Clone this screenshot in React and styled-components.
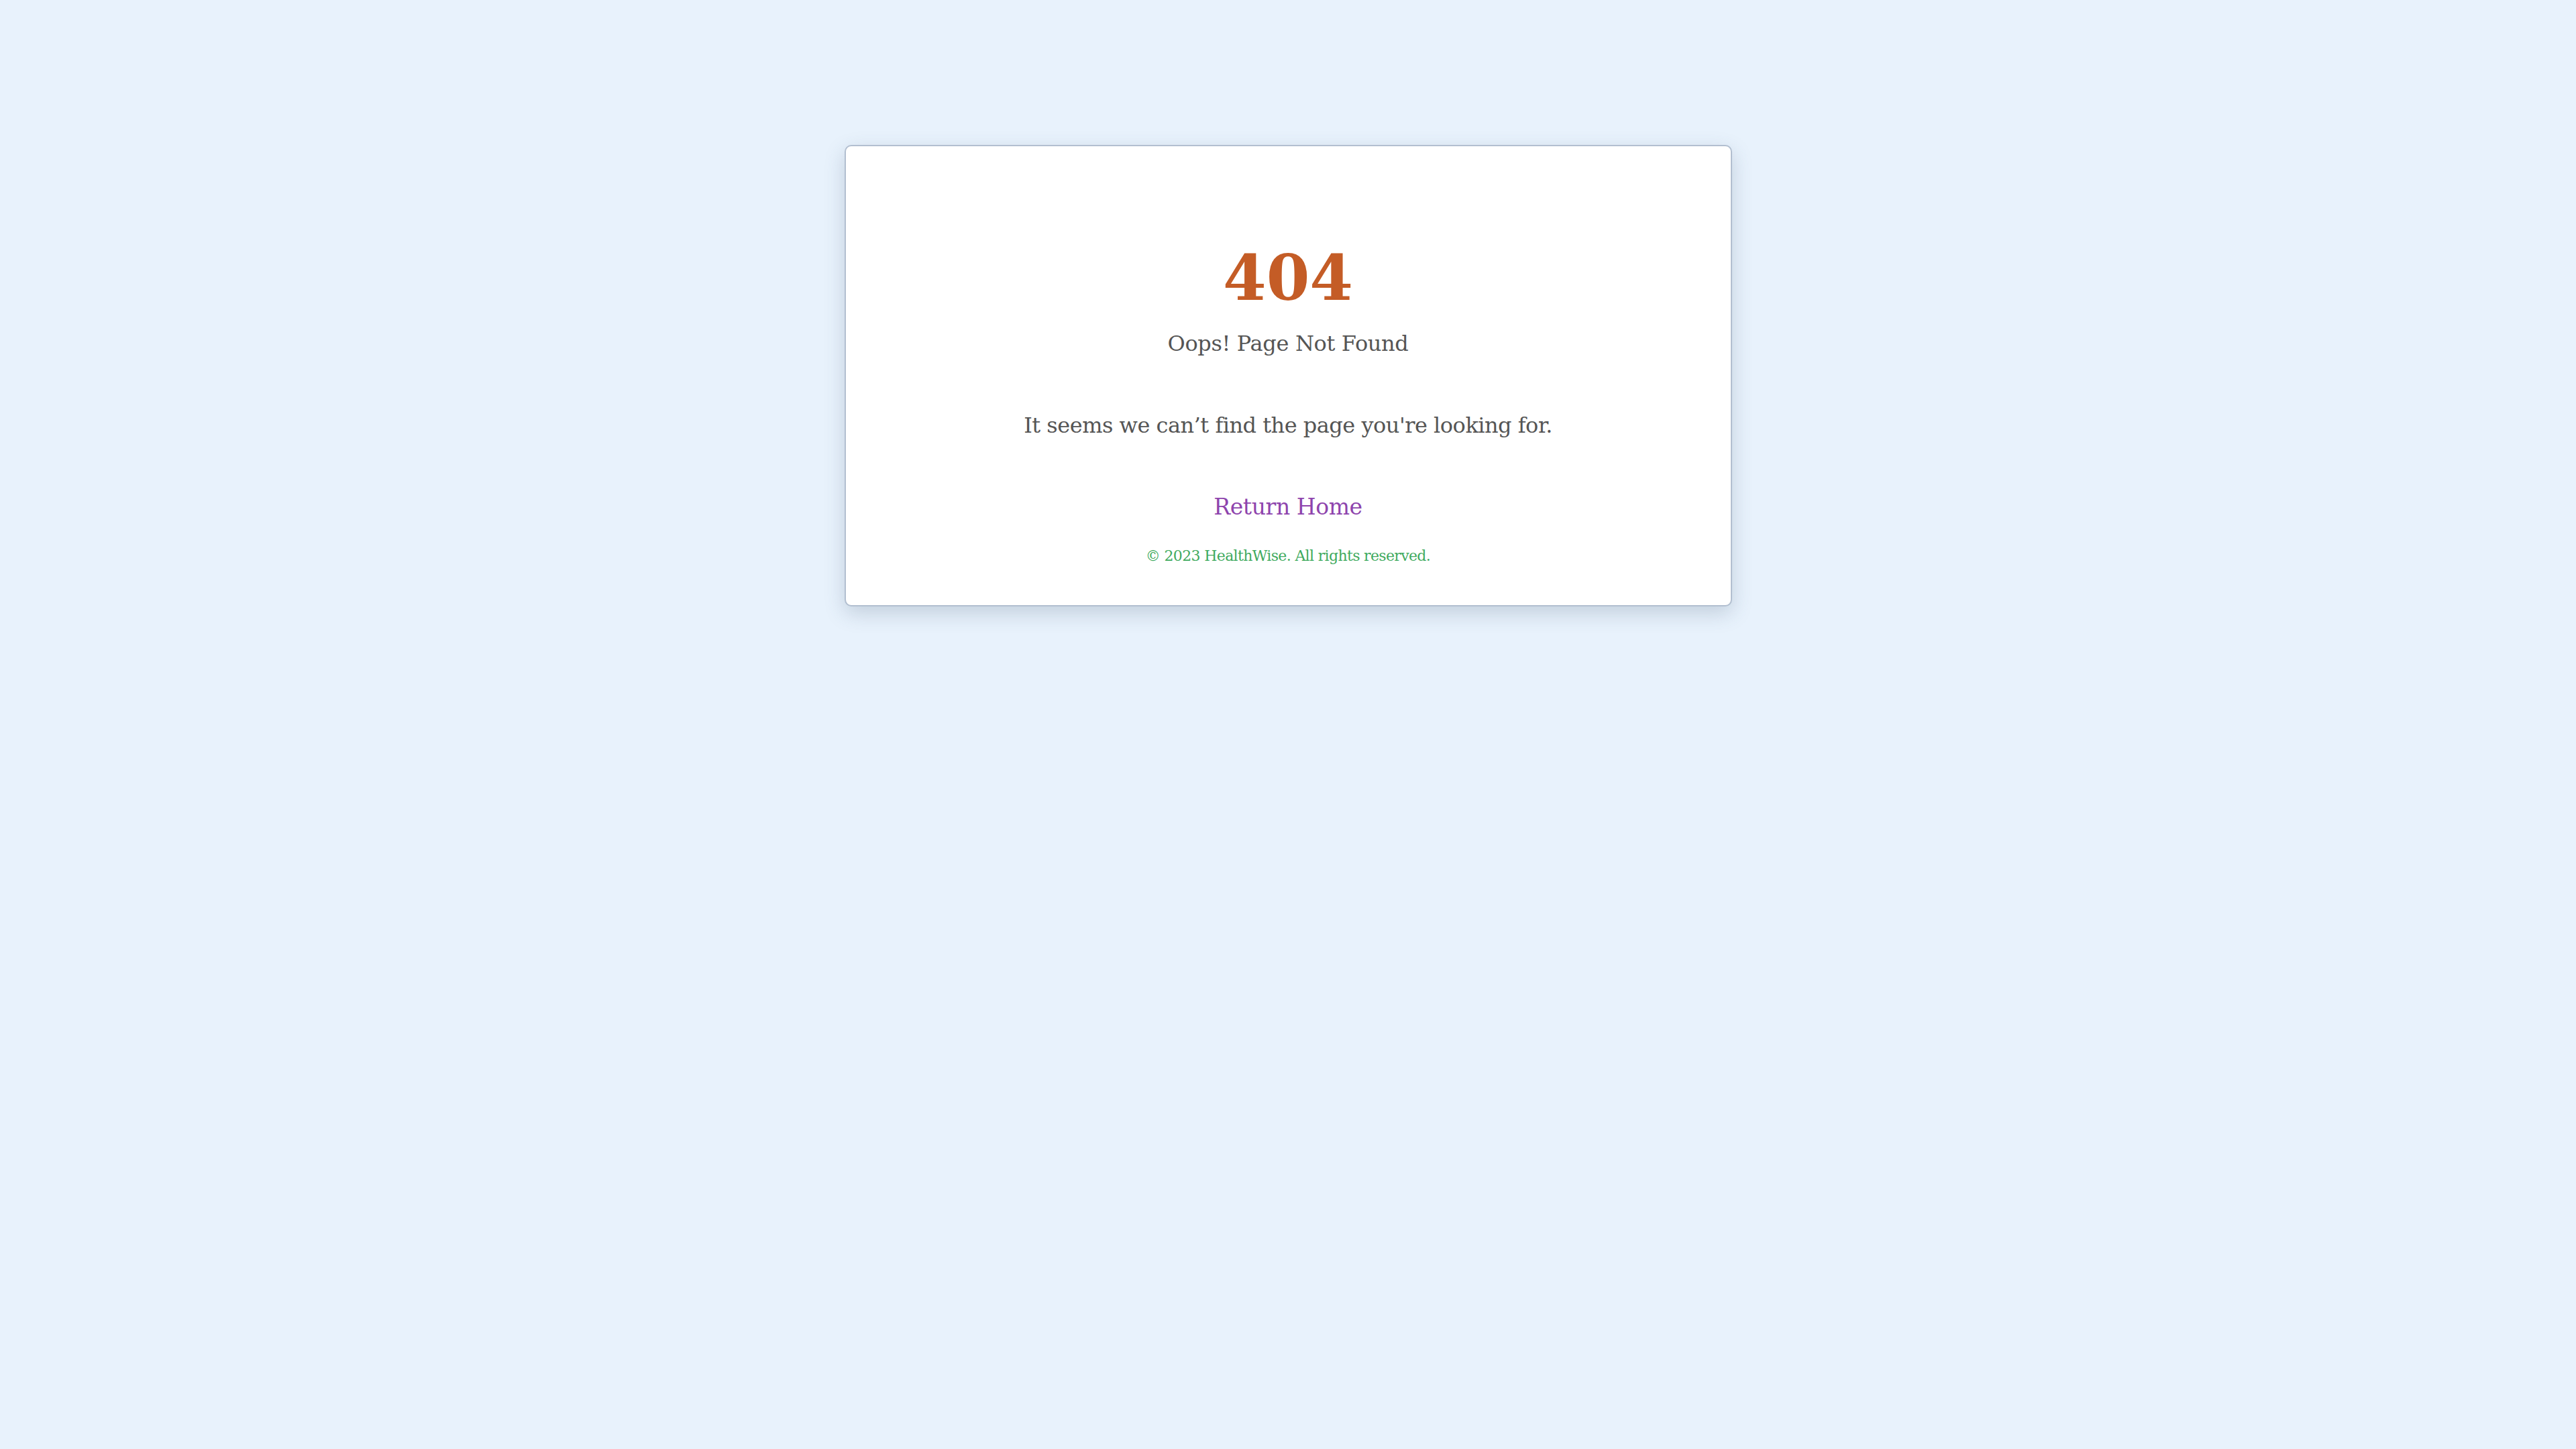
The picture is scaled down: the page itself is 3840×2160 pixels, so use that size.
import styled, { createGlobalStyle } from 'styled-components';

const GlobalStyle = createGlobalStyle`
  html, body {
    margin: 0;
    padding: 0;
    background: #e8f2fc;
  }
  body {
    min-height: 2160px;
    font-family: "DejaVu Serif", "Liberation Serif", serif;
  }
`;

const Page = styled.main`
  display: flex;
  justify-content: center;
  padding-top: 216px;
`;

const Card = styled.section`
  box-sizing: border-box;
  width: 1323px;
  padding: 150px 40px 62px;
  background: #ffffff;
  border: 2px solid #b2bfd0;
  border-radius: 10px;
  box-shadow: 0 10px 30px rgba(60, 80, 110, 0.22);
  display: flex;
  flex-direction: column;
  align-items: center;
  text-align: center;
`;

const Code = styled.h1`
  margin: 0;
  font-size: 93px;
  line-height: 1;
  font-weight: 700;
  color: #c45c26;
`;

const Title = styled.h2`
  margin: 35px 0 0;
  font-size: 32px;
  line-height: 1;
  font-weight: 400;
  letter-spacing: -0.35px;
  color: #555555;
`;

const Message = styled.p`
  margin: ${p => p.$gap}px 0 0;
  font-size: ${p => p.$size}px;
  line-height: 1;
  letter-spacing: ${p => p.$track}px;
  color: ${p => p.$color};
`;

const HomeLink = styled.a`
  margin-top: 89px;
  font-size: 33px;
  line-height: 1;
  letter-spacing: -0.4px;
  color: #8e44ad;
  text-decoration: none;
`;

const App = () => {
  return (
    <>
      <GlobalStyle />
      <Page>
        <Card>
          <Code>404</Code>
          <Title>Oops! Page Not Found</Title>
          <Message $gap={90} $size={32} $track={-0.5} $color="#555555">
            It seems we can’t find the page you're looking for.
          </Message>
          <HomeLink href="#">Return Home</HomeLink>
          <Message $gap={46} $size={22} $track={-0.65} $color="#3faa5e">
            © 2023 HealthWise. All rights reserved.
          </Message>
        </Card>
      </Page>
    </>
  );
};

export default App;
